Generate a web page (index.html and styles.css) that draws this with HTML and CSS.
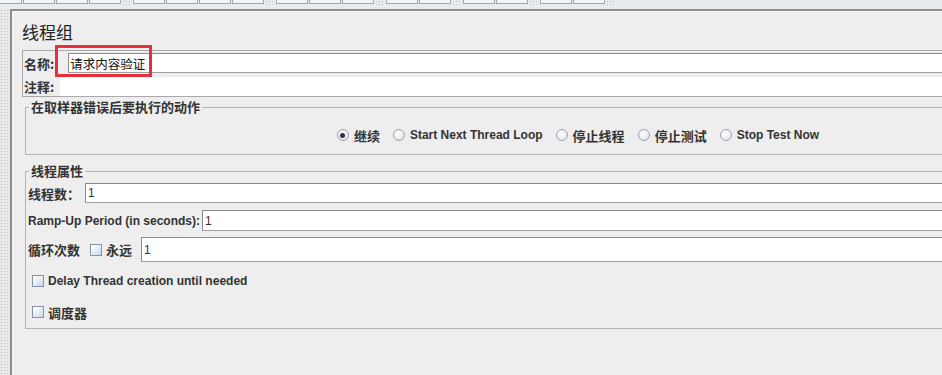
FILE: index.html
```html
<!DOCTYPE html>
<html lang="zh-CN">

<head>
    <meta charset="UTF-8">
    <meta name="viewport" content="width=device-width, initial-scale=1.0">
    <title>线程组</title>
    <link rel="stylesheet" href="styles.css">
</head>

<body>
    <div class="toolbar">
        <span class="tb-btn first"></span>
        <span class="tb-btn"></span>
        <span class="tb-btn"></span>
        <span class="tb-btn"></span>
        <span class="tb-sep"></span>
        <span class="tb-btn"></span>
        <span class="tb-btn"></span>
        <span class="tb-btn"></span>
        <span class="tb-btn"></span>
        <span class="tb-sep"></span>
        <span class="tb-btn"></span>
        <span class="tb-btn"></span>
        <span class="tb-btn"></span>
        <span class="tb-sep"></span>
        <span class="tb-btn"></span>
        <span class="tb-btn"></span>
        <span class="tb-sep"></span>
        <span class="tb-btn"></span>
        <span class="tb-btn"></span>
        <span class="tb-sep"></span>
        <span class="tb-btn"></span>
        <span class="tb-btn"></span>
        <span class="tb-sep"></span>
    </div>

    <div class="workspace">
        <div class="splitter"></div>
        <div class="editor">
            <div class="title">线程组</div>

            <div class="name-panel">
                <div class="name-row">
                    <span class="lbl">名称:</span>
                    <div class="field name-field">请求内容验证</div>
                </div>
                <div class="name-row comment-row">
                    <span class="lbl">注释:</span>
                    <div class="field comment-field"></div>
                </div>
                <span class="mark"></span>
            </div>

            <fieldset class="group action-group">
                <legend>在取样器错误后要执行的动作</legend>
                <div class="radios">
                    <span class="radio-item"><span class="radio checked"></span><span class="zh">继续</span></span>
                    <span class="radio-item"><span class="radio"></span>Start Next Thread Loop</span>
                    <span class="radio-item"><span class="radio"></span><span class="zh">停止线程</span></span>
                    <span class="radio-item"><span class="radio"></span><span class="zh">停止测试</span></span>
                    <span class="radio-item"><span class="radio"></span>Stop Test Now</span>
                </div>
            </fieldset>

            <fieldset class="group props-group">
                <legend>线程属性</legend>
                <div class="prop-row row-threads">
                    <span class="lbl zh">线程数：</span>
                    <div class="field threads-field">1</div>
                </div>
                <div class="prop-row row-ramp">
                    <span class="lbl">Ramp-Up Period (in seconds):</span>
                    <div class="field ramp-field">1</div>
                </div>
                <div class="prop-row row-loop">
                    <span class="lbl zh">循环次数</span>
                    <span class="check loop-check"></span>
                    <span class="lbl zh">永远</span>
                    <div class="field loop-field">1</div>
                </div>
                <div class="check-row row-delay">
                    <span class="check"></span>
                    <span class="lbl">Delay Thread creation until needed</span>
                </div>
                <div class="check-row row-sched">
                    <span class="check"></span>
                    <span class="lbl zh">调度器</span>
                </div>
            </fieldset>
        </div>
    </div>
</body>

</html>
```

FILE: styles.css
```css
* {
    box-sizing: border-box;
}

body {
    margin: 0;
    width: 942px;
    height: 375px;
    overflow: hidden;
    background-color: #eeeeee;
    font-family: 'Liberation Sans', 'Noto Sans CJK SC', sans-serif;
    font-size: 12px;
    color: #333;
}

/* toolbar, only the bottom edge is visible */
.toolbar {
    height: 9px;
    display: flex;
    gap: 1px;
    background-color: #e8ebee;
}

.tb-btn {
    width: 32px;
    height: 4px;
    flex-shrink: 0;
    background-color: #f3f4f6;
    border: 1px solid #a3a6aa;
    border-top: none;
}

.tb-btn.first {
    width: 22px;
    border-left: none;
}

.tb-sep {
    width: 10px;
    height: 5px;
    flex-shrink: 0;
    background-image: radial-gradient(#b9bcc0 0.7px, transparent 1px);
    background-size: 3px 3px;
}

.workspace {
    display: flex;
    height: 366px;
}

.splitter {
    width: 10px;
    flex-shrink: 0;
    background-color: #e9e9e9;
    background-image: radial-gradient(#c2c2c2 0.7px, transparent 1px);
    background-size: 3px 3px;
}

.editor {
    width: 1160px;
    flex-shrink: 0;
    border-top: 2px solid #8c8c8c;
    border-left: 2px solid #8c8c8c;
    box-shadow: inset 1px 1px 0 #f8f8f8;
    padding: 11px 0 0 10px;
}

.title {
    font-family: 'Noto Sans CJK SC', sans-serif;
    font-size: 17px;
    line-height: 20px;
    color: #222;
    margin-bottom: 8px;
}

.lbl {
    font-weight: bold;
    white-space: nowrap;
}

.zh,
.name-row .lbl,
legend {
    font-family: 'Noto Sans CJK SC', sans-serif;
    font-size: 13px;
}

/* name / comment */
.name-panel {
    position: relative;
    width: 1130px;
    border: 1px solid #a9a9a9;
    border-right: none;
    padding-left: 1px;
}

.name-row {
    display: flex;
    align-items: center;
    height: 20px;
    margin-top: 2px;
}

.comment-row {
    height: 19px;
    margin-top: 4px;
}

.field {
    flex: 1;
    height: 100%;
    background-color: #fff;
    border: 1px solid #8a8a8a;
    border-bottom-color: #a0a0a0;
    border-right: none;
    padding-left: 2px;
    display: flex;
    align-items: center;
    font-size: 12px;
    color: #333;
}

.name-field {
    margin-left: 14px;
    padding-left: 1px;
    font-family: 'Noto Sans CJK SC', sans-serif;
    font-size: 12.5px;
    color: #111;
}

.comment-field {
    margin-left: 6px;
    border: none;
}

.mark {
    position: absolute;
    left: 32px;
    top: -6px;
    width: 97px;
    height: 32px;
    border: 3px solid #e5303a;
}

/* titled groups */
.group {
    width: 1104px;
    margin: 0 3px;
    border: 1px solid #b4b4b4;
    padding: 0 0 0 2px;
    min-width: 0;
}

.group legend {
    font-weight: bold;
    line-height: 14px;
    padding: 0 2px;
    margin-left: 1px;
    background-color: #eeeeee;
    color: #333;
}

.action-group {
    margin-top: 3px;
    padding-top: 13px;
    padding-bottom: 11px;
}

.radios {
    display: flex;
    justify-content: center;
    align-items: center;
    height: 16px;
    gap: 13px;
    font-weight: bold;
}

.radio-item {
    display: flex;
    align-items: center;
    gap: 5px;
    white-space: nowrap;
}

.radio {
    width: 12px;
    height: 12px;
    border-radius: 50%;
    border: 1px solid #9aa4b0;
    background: radial-gradient(circle at 40% 35%, #ffffff, #d8e0ea);
    display: flex;
    align-items: center;
    justify-content: center;
}

.radio.checked::after {
    content: '';
    width: 5px;
    height: 5px;
    border-radius: 50%;
    background-color: #333;
}

.props-group {
    margin-top: 9px;
    padding-top: 5px;
    padding-bottom: 8px;
}

.prop-row {
    display: flex;
    align-items: center;
    margin-right: 3px;
}

.row-threads {
    height: 20px;
}

.threads-field {
    margin-left: 5px;
}

.row-ramp {
    height: 21px;
    margin-top: 7px;
}

.ramp-field {
    margin-left: 2px;
}

.row-loop {
    height: 25px;
    margin-top: 6px;
}

.loop-check {
    margin: 0 4px 0 10px;
}

.loop-field {
    margin-left: 9px;
}

.check {
    width: 12px;
    height: 12px;
    flex-shrink: 0;
    border: 1px solid #8393a8;
    background: linear-gradient(135deg, #ffffff 10%, #c9d7e6 100%);
}

.check-row {
    display: flex;
    align-items: center;
    gap: 4px;
    height: 16px;
    padding-left: 4px;
}

.row-delay {
    margin-top: 11px;
}

.row-sched {
    margin-top: 15px;
}
```
